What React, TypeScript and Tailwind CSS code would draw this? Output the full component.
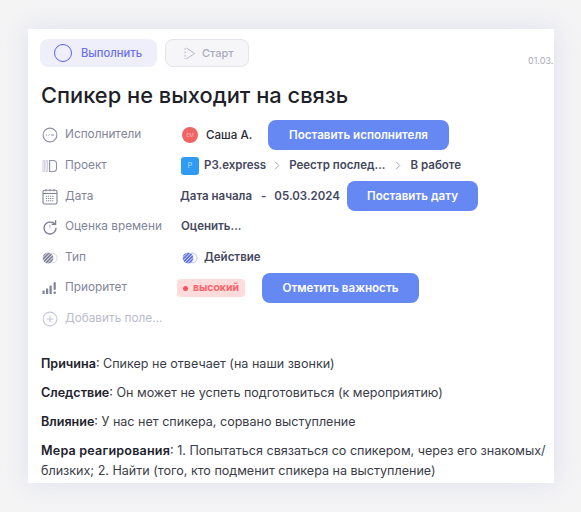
import React from "react";

const Stripes = ({ id, fill, ring }: { id: string; fill: string; ring: string }) => (
  <svg width="16" height="14" viewBox="0 0 16 14" fill="none">
    <defs>
      <pattern id={id} width="2.4" height="2.4" patternUnits="userSpaceOnUse" patternTransform="rotate(45)">
        <rect width="2.4" height="2.4" fill={fill} />
        <rect width="0.8" height="2.4" fill="#ffffff" opacity="0.75" />
      </pattern>
    </defs>
    <circle cx="10.2" cy="7" r="4.9" stroke={ring} strokeWidth="1" />
    <circle cx="6" cy="7" r="5.4" fill={`url(#${id})`} />
  </svg>
);

const icons: Record<string, React.ReactNode> = {
  users: (
    <svg width="16" height="16" viewBox="0 0 16 16" fill="none" stroke="#8d90a6" strokeWidth="1.1">
      <circle cx="8" cy="8" r="6.9" />
      <path d="M3.8 8h1.4M6.6 8.6l1-1.4M9 8h1M11 7.3v1.4M10.3 8h1.4" strokeWidth="0.9" />
    </svg>
  ),
  project: (
    <svg width="16" height="16" viewBox="0 0 16 16" fill="none">
      <path d="M1 2.5h1.6v11H1zM4 2.5h1.6v11H4z" stroke="#c9cbd8" strokeWidth="0.9" />
      <path d="M7.6 2.5h3.6c2 0 3.3 1.3 3.3 3v5c0 1.7-1.3 3-3.3 3H7.6z" stroke="#8d90a6" strokeWidth="1.1" />
    </svg>
  ),
  date: (
    <svg width="16" height="17" viewBox="0 0 16 17" fill="none" stroke="#7f8299">
      <rect x="1" y="2.2" width="14" height="13.8" rx="1.6" strokeWidth="1.1" />
      <path d="M1 5.5h14" strokeWidth="1.1" />
      <path d="M4 1v2.4M8 1v2.4M12 1v2.4" strokeWidth="0.9" />
      <path d="M4 8.2h8M4 10.5h8M4 12.8h8" strokeWidth="1.1" strokeDasharray="1.1 0.8" />
    </svg>
  ),
  time: (
    <svg width="16" height="16" viewBox="0 0 16 16" fill="none" stroke="#7f8299" strokeWidth="1.4">
      <path d="M14 9.4A6 6 0 1 1 8.4 3c1.9 0 3.4.6 4.5 2" strokeLinecap="round" />
      <path d="M13.6 1.2v4.2H9.6" strokeWidth="1.3" />
      <path d="M7 6.4h1v3" strokeWidth="0.9" opacity="0.6" />
    </svg>
  ),
  type: <Stripes id="typeGray" fill="#80839a" ring="#d5d6e0" />,
  priority: (
    <svg width="15" height="14" viewBox="0 0 15 14" fill="#7f8299">
      <rect x="0.5" y="9.5" width="2.2" height="3.5" rx="0.5" />
      <rect x="4" y="7.5" width="2.2" height="5.5" rx="0.5" />
      <rect x="7.5" y="4.5" width="2.2" height="8.5" rx="0.5" />
      <rect x="11.6" y="1" width="2.2" height="8" rx="1" />
      <circle cx="12.7" cy="11.7" r="1.3" />
    </svg>
  ),
  add: (
    <svg width="16" height="16" viewBox="0 0 16 16" fill="none" stroke="#c6c8d6" strokeWidth="1.1">
      <circle cx="8" cy="8" r="6.9" />
      <path d="M8 4.4v7.2M4.4 8h7.2" />
    </svg>
  ),
};

const Chevron = () => (
  <svg width="6" height="9" viewBox="0 0 6 9" fill="none" stroke="#a3a6b8" strokeWidth="1" className="shrink-0">
    <path d="M1 .7l3.8 3.8L1 8.3" />
  </svg>
);

const Action = ({ children, w }: { children: React.ReactNode; w: string }) => (
  <div className={`${w} h-[30px] shrink-0 rounded-lg bg-[#6688f2] flex items-center justify-center text-[11.6px] font-semibold text-white whitespace-nowrap`}>
    {children}
  </div>
);

const Row = ({ icon, label, muted, children }: { icon: string; label: string; muted?: boolean; children?: React.ReactNode }) => (
  <div className="flex items-center h-[30.6px] ml-[1px]">
    <div className="w-[24px] flex items-center justify-start pl-[1px] shrink-0">{icons[icon]}</div>
    <div className={`w-[116px] shrink-0 text-[11.8px] whitespace-nowrap ${muted ? "text-[#b9bbcb]" : "text-[#82859b]"}`}>{label}</div>
    {children}
  </div>
);

export default function App() {
  return (
    <div className="w-[581px] h-[512px] overflow-hidden bg-[#f4f4f5] pt-[29px] pl-[28px] font-['Inter',sans-serif]">
      <div className="w-[526px] h-[454px] overflow-hidden bg-white pl-[12px] pt-[10px] shadow-[0_0_24px_rgba(215,217,235,0.75)]">
        <div className="flex items-start h-[28px]">
          <div className="shrink-0 w-[117px] h-[28px] rounded-lg bg-[#efeffc] flex items-center pl-[14px] gap-[9px] text-[11.2px] font-medium text-[#6a70e8]">
            <span className="w-[18px] h-[18px] shrink-0 rounded-full border-[1.5px] border-[#5c63ea]" />
            Выполнить
          </div>
          <div className="shrink-0 ml-[8px] w-[84px] h-[28px] rounded-lg bg-[#f6f6f9] border border-[#e3e4ec] flex items-center pl-[18px] gap-[7px] text-[11px] font-medium text-[#a9abbb]">
            <svg width="11" height="13" viewBox="0 0 11 13" fill="none" stroke="#b4b6c5" strokeWidth="1">
              <path d="M1 1.2v1.6M1 4.6v1.6M1 8v1.6M1 11v1" />
              <path d="M2.5 1l8 5.5-8 5.5" />
            </svg>
            Старт
          </div>
          <div className="shrink-0 ml-[279px] mt-[15px] text-[9px] text-[#a9abbb] whitespace-nowrap">01.03.2024</div>
        </div>

        <h1 className="mt-[14px] ml-[1px] text-[21.85px] leading-[28px] font-medium text-[#1e1f29] whitespace-nowrap">
          Спикер не выходит на связь
        </h1>

        <div className="mt-[11px] flex flex-col">
          <Row icon="users" label="Исполнители">
            <div className="flex items-center">
              <span className="w-[16px] h-[16px] ml-[1px] rounded-full bg-[#ef6464] flex items-center justify-center text-[5px] text-[#f9b5b5]">ЕМ</span>
              <span className="ml-[8px] w-[46px] text-[11.6px] font-medium text-[#2a2b36] whitespace-nowrap">Саша А.</span>
              <div className="ml-[16px]"><Action w="w-[181px]">Поставить исполнителя</Action></div>
            </div>
          </Row>
          <Row icon="project" label="Проект">
            <div className="flex items-center text-[11.5px] font-semibold text-[#444860] whitespace-nowrap">
              <span className="w-[18px] h-[18px] rounded-[3px] bg-[#2f9bf5] flex items-center justify-center text-[7px] font-normal text-[#bfe0fc]">P</span>
              <span className="ml-[5px]">P3.express</span>
              <span className="ml-[8px] mr-[9px]"><Chevron /></span>
              <span>Реестр послед...</span>
              <span className="ml-[9px] mr-[10px]"><Chevron /></span>
              <span>В работе</span>
            </div>
          </Row>
          <Row icon="date" label="Дата">
            <div className="flex items-center -ml-[1px] text-[11.5px] font-semibold text-[#444860] whitespace-nowrap">
              <span>Дата начала</span>
              <span className="ml-[9px]">-</span>
              <span className="ml-[8px]">05.03.2024</span>
              <div className="ml-[7px]"><Action w="w-[131px]">Поставить дату</Action></div>
            </div>
          </Row>
          <Row icon="time" label="Оценка времени">
            <span className="text-[11.5px] font-semibold text-[#444860]">Оценить...</span>
          </Row>
          <Row icon="type" label="Тип">
            <div className="flex items-center ml-[1px] gap-[6px] text-[11.5px] font-semibold text-[#444860]">
              <Stripes id="typeBlue" fill="#5b6fe0" ring="#b9c2f5" />
              Действие
            </div>
          </Row>
          <Row icon="priority" label="Приоритет">
            <div className="flex items-center -ml-[4px]">
              <div className="w-[68px] h-[18px] rounded-[4px] bg-[#ffdcdc] flex items-center pl-[6px] gap-[5px] text-[10.4px] font-bold text-[#f9626a]">
                <span className="w-[5px] h-[5px] rounded-full bg-[#f9525c]" />
                высокий
              </div>
              <div className="ml-[17px]"><Action w="w-[157px]">Отметить важность</Action></div>
            </div>
          </Row>
          <Row icon="add" label="Добавить поле..." muted />
        </div>

        <div className="mt-[20px] ml-[1px] w-[507px] text-[12.55px] leading-[20px] text-[#3a3c48] flex flex-col gap-[9px]">
          <p><b className="font-semibold text-[#21222c]">Причина</b>: Спикер не отвечает (на наши звонки)</p>
          <p><b className="font-semibold text-[#21222c]">Следствие</b>: Он может не успеть подготовиться (к мероприятию)</p>
          <p><b className="font-semibold text-[#21222c]">Влияние</b>: У нас нет спикера, сорвано выступление</p>
          <p><b className="font-semibold tracking-[0.2px] text-[#21222c]">Мера реагирования</b>: 1. Попытаться связаться со спикером, через его знакомых/ близких; 2. Найти (того, кто подменит спикера на выступление)</p>
        </div>
      </div>
    </div>
  );
}
